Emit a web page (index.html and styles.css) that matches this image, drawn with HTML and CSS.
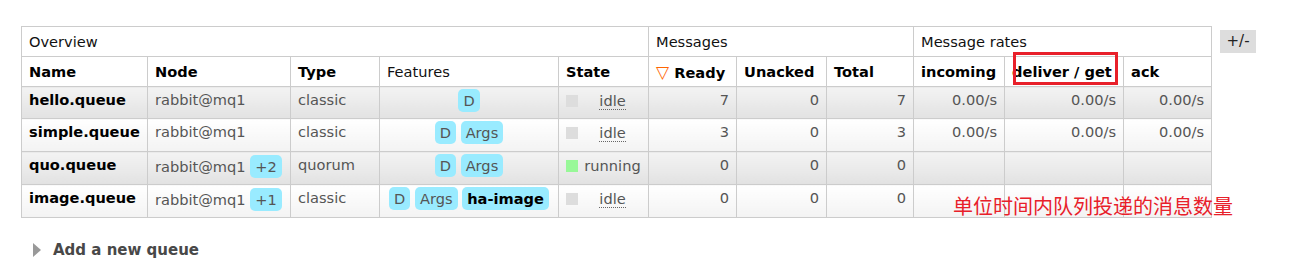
FILE: index.html
```html
<!DOCTYPE html>
<html>
<head>
<meta charset="utf-8">
<link rel="stylesheet" href="styles.css">
</head>
<body>
<div class="page">
  <div class="table-row">
    <div class="table-wrap">
      <table class="list">
        <colgroup>
          <col style="width:126px"><col style="width:143px"><col style="width:89px"><col style="width:179px"><col style="width:90px">
          <col style="width:88px"><col style="width:90px"><col style="width:87px">
          <col style="width:91px"><col style="width:119px"><col style="width:88px">
        </colgroup>
        <thead>
          <tr class="group">
            <th colspan="5">Overview</th>
            <th colspan="3">Messages</th>
            <th colspan="3">Message rates</th>
          </tr>
          <tr class="heads">
            <th>Name</th><th>Node</th><th>Type</th><th class="light">Features</th><th>State</th>
            <th><span class="sort">▽</span> Ready</th><th>Unacked</th><th>Total</th>
            <th>incoming</th><th>deliver / get</th><th>ack</th>
          </tr>
        </thead>
        <tbody>
          <tr class="alt1 first">
            <td class="name">hello.queue</td>
            <td>rabbit@mq1</td>
            <td>classic</td>
            <td class="c"><span class="tag">D</span></td>
            <td><div class="state"><span class="sq grey"></span><span class="st"><abbr>idle</abbr></span></div></td>
            <td class="r">7</td><td class="r">0</td><td class="r">7</td>
            <td class="r">0.00/s</td><td class="r">0.00/s</td><td class="r">0.00/s</td>
          </tr>
          <tr class="alt2">
            <td class="name">simple.queue</td>
            <td>rabbit@mq1</td>
            <td>classic</td>
            <td class="c"><span class="tag">D</span> <span class="tag">Args</span></td>
            <td><div class="state"><span class="sq grey"></span><span class="st"><abbr>idle</abbr></span></div></td>
            <td class="r">3</td><td class="r">0</td><td class="r">3</td>
            <td class="r">0.00/s</td><td class="r">0.00/s</td><td class="r">0.00/s</td>
          </tr>
          <tr class="alt1">
            <td class="name">quo.queue</td>
            <td class="node">rabbit@mq1 <span class="tag">+2</span></td>
            <td>quorum</td>
            <td class="c"><span class="tag">D</span> <span class="tag">Args</span></td>
            <td><div class="state"><span class="sq green"></span><span class="st">running</span></div></td>
            <td class="r">0</td><td class="r">0</td><td class="r">0</td>
            <td></td><td></td><td></td>
          </tr>
          <tr class="alt2">
            <td class="name">image.queue</td>
            <td class="node">rabbit@mq1 <span class="tag">+1</span></td>
            <td>classic</td>
            <td class="c"><span class="tag">D</span> <span class="tag">Args</span> <span class="tag strong">ha-image</span></td>
            <td><div class="state"><span class="sq grey"></span><span class="st"><abbr>idle</abbr></span></div></td>
            <td class="r">0</td><td class="r">0</td><td class="r">0</td>
            <td></td><td></td><td></td>
          </tr>
        </tbody>
      </table>
      <div class="mark-box"></div>
      <div class="note">单位时间内队列投递的消息数量</div>
    </div>
    <div class="toggle">+/-</div>
  </div>
  <div class="add">
    <span class="tri"></span>
    <span>Add a new queue</span>
  </div>
</div>
</body>
</html>
```

FILE: styles.css
```css
html, body {
  margin: 0;
  padding: 0;
  background: #fff;
}
body {
  font-family: "DejaVu Sans", Verdana, sans-serif;
  font-size: 14.6px;
  color: #484848;
}
.page {
  padding: 26px 0 0 21px;
}
.table-row {
  display: flex;
  align-items: flex-start;
  gap: 8px;
}
.table-wrap {
  position: relative;
}
table.list {
  border-collapse: collapse;
  table-layout: fixed;
  width: 1190px;
}
table.list th,
table.list td {
  border: 1px solid #ccc;
  padding: 0 7px;
  text-align: left;
  white-space: nowrap;
  overflow: visible;
}
tr.group th {
  height: 29px;
  font-weight: normal;
  color: #111;
  background: #fff;
  vertical-align: middle;
}
tr.heads th {
  height: 29px;
  font-weight: bold;
  color: #000;
  background: #fff;
  vertical-align: middle;
}
tr.heads th.light {
  font-weight: normal;
  color: #111;
}
.sort {
  color: #f60;
  font-weight: normal;
  font-size: 17px;
}
table.list tbody td {
  height: 33px;
  vertical-align: top;
  padding-top: 4px;
  padding-bottom: 0;
  box-sizing: border-box;
  color: #555;
  line-height: 18px;
}
table.list tbody tr.first td {
  height: 32px;
}
tr.alt1 td {
  background: linear-gradient(#f3f3f3, #e2e2e2);
}
tr.alt2 td {
  background: linear-gradient(#ffffff, #f3f3f3);
}
table.list td.name {
  font-weight: bold;
  color: #000;
}
table.list td.c { text-align: center; }
table.list td.r { text-align: right; }
table.list tbody td.c {
  padding-top: 2px;
}
table.list tbody td.node {
  padding-top: 3px;
}
.tag {
  display: inline-block;
  background: #99ebff;
  color: #555;
  border-radius: 5px;
  padding: 2px 5px;
  line-height: 19px;
}
.tag.strong {
  font-weight: bold;
  color: #000;
}
.state {
  display: flex;
  align-items: center;
  gap: 6px;
  padding-top: 2px;
}
.sq {
  width: 12px;
  height: 12px;
  flex: none;
}
.sq.grey { background: #ddd; }
.sq.green { background: #98f898; }
.st {
  flex: 1;
  text-align: center;
  line-height: 15px;
}
abbr {
  text-decoration: none;
  border-bottom: 1px dotted #666;
}
.toggle {
  margin-top: 4px;
  background: #ddd;
  color: #222;
  font-size: 15px;
  width: 36px;
  height: 23px;
  line-height: 23px;
  text-align: center;
}
.mark-box {
  position: absolute;
  left: 992px;
  top: 26px;
  width: 99px;
  height: 27px;
  border: 3px solid #e8202a;
}
.note {
  position: absolute;
  left: 932px;
  top: 167px;
  font-family: "Noto Sans CJK SC", sans-serif;
  font-size: 20px;
  color: #e8202a;
  white-space: nowrap;
  line-height: 26px;
}
.add {
  display: flex;
  align-items: center;
  gap: 12px;
  margin-top: 23px;
  margin-left: 12px;
  font-weight: bold;
  font-size: 15px;
  color: #484848;
}
.tri {
  width: 0;
  height: 0;
  border-top: 7px solid transparent;
  border-bottom: 7px solid transparent;
  border-left: 8px solid #999;
}
```
